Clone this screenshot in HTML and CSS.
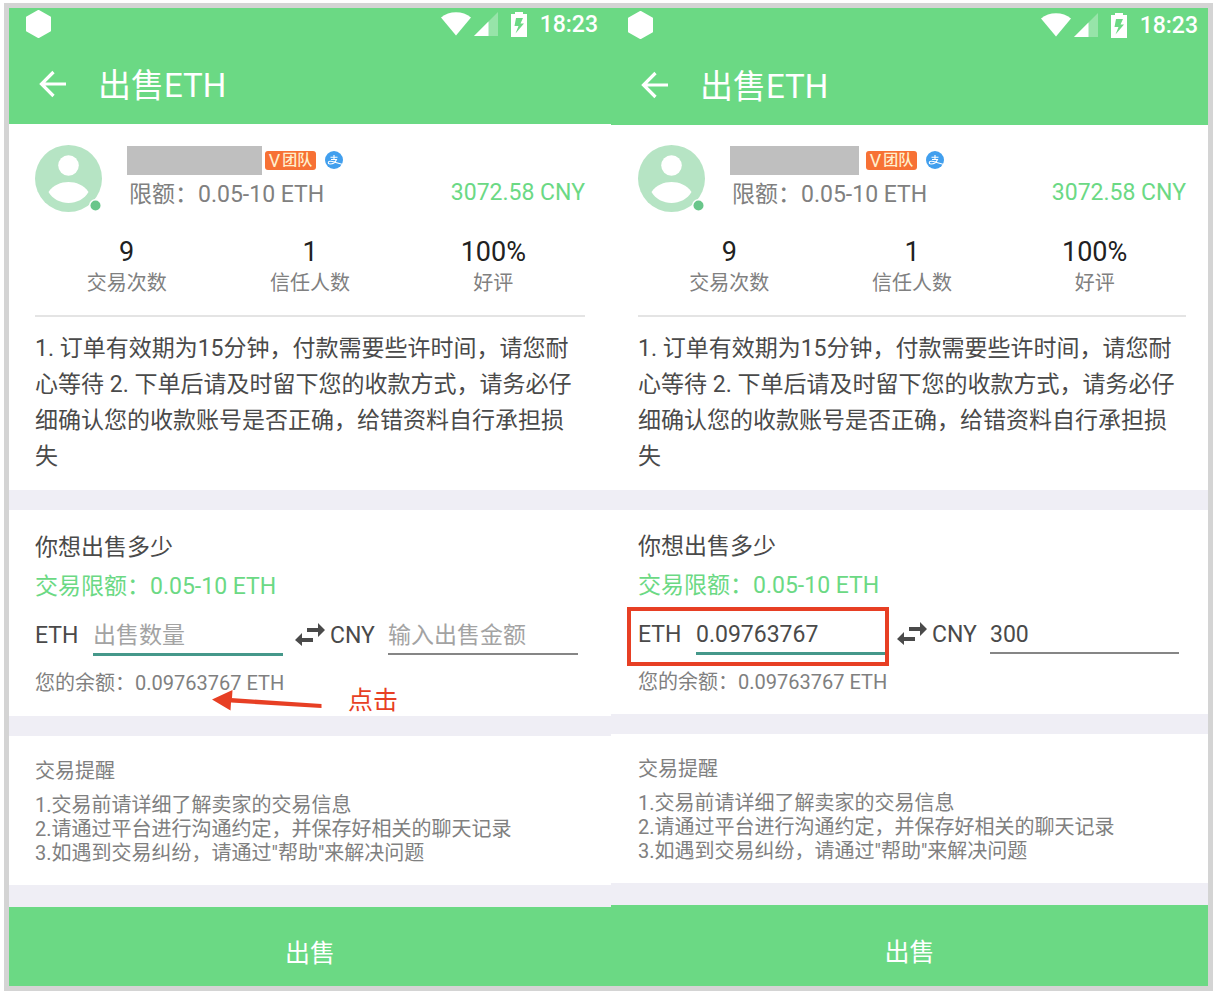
FILE: index.html
```html
<!DOCTYPE html>
<html lang="zh-CN">
<head>
<meta charset="utf-8">
<meta name="viewport" content="width=device-width, initial-scale=1">
<title>出售ETH</title>
<link rel="stylesheet" href="styles.css">
</head>
<body>
<svg class="sprite" aria-hidden="true">
  <symbol id="hexagon" viewBox="0 0 25 28"><path d="M12.500 1 24 7.300V20.700L12.500 27 1 20.700V7.300Z" fill="#fff" stroke="#fff" stroke-width="2" stroke-linejoin="round"/></symbol>
  <symbol id="wifi" viewBox="0 0 30 24"><path d="M0 5.500C8-1.500 22-1.500 30 5.500L15 23.500Z" fill="#fff"/></symbol>
  <symbol id="signal" viewBox="0 0 24 24"><path d="M24 0V24H0Z" fill="#fff" opacity=".3"/><path d="M14.500 9.500V24H0Z" fill="#fff"/></symbol>
  <symbol id="battery" viewBox="0 0 16 25"><path fill-rule="evenodd" d="M4 0H12V2H16V25H0V2H4ZM5 6 3.500 14H7.500L4.500 21.500 13 11.500H9.500L12 6Z" fill="#fff"/></symbol>
  <symbol id="back" viewBox="0 0 28 28"><path d="M27 14H3M14.500 2 2.500 14 14.500 26" fill="none" stroke="#fff" stroke-width="3.200"/></symbol>
  <symbol id="avatar" viewBox="0 0 67 67"><circle cx="33.500" cy="33.500" r="33.500" fill="#b6e4c4"/><circle cx="33.500" cy="20.500" r="10.300" fill="#fff"/><path d="M13.500 47C18 40 26 37 33.500 37S49 40 53.500 47C49.500 54 41.500 58 33.500 58S17.500 54 13.500 47Z" fill="#fff"/><circle cx="60.500" cy="60.500" r="6.500" fill="#fff"/><circle cx="60.500" cy="60.500" r="5" fill="#69c68a"/></symbol>
  <symbol id="alipay" viewBox="0 0 18 18"><circle cx="9" cy="9" r="9" fill="#419fee"/><path d="M5.500 6.300H12.500M9 4V8.500M6 8.500H11.500C10.500 11 8 13 5 13 2.500 12.800 2.800 10.600 5 10.300 8 10 12 12.500 17 13.300" fill="none" stroke="#fff" stroke-width="1.100"/></symbol>
  <symbol id="swap" viewBox="0 0 30 24"><path d="M12 5H23V0L30 7 23 14V9H12ZM18 15H7V10L0 17 7 23V19H18Z" fill="#4a4a4a"/></symbol>
</svg>
<main class="frame">
  <section class="screen">
    <header class="header">
      <div class="status">
        <svg class="status__app"><use href="#hexagon"/></svg>
        <svg class="status__wifi"><use href="#wifi"/></svg>
        <svg class="status__signal"><use href="#signal"/></svg>
        <svg class="status__battery"><use href="#battery"/></svg>
        <time>18:23</time>
      </div>
      <div class="toolbar">
        <button class="back" type="button" aria-label="返回"><svg><use href="#back"/></svg></button>
        <h1>出售ETH</h1>
      </div>
    </header>
    <section class="card seller">
      <div class="profile">
        <svg class="avatar"><use href="#avatar"/></svg>
        <div class="profile__info">
          <div class="name"><span class="name__mask"></span><span class="badge"><span class="badge__v">V</span>团队</span><svg class="pay"><use href="#alipay"/></svg></div>
          <p class="limit">限额：0.05-10 ETH</p>
        </div>
        <p class="price">3072.58 CNY</p>
      </div>
      <dl class="stats">
        <div><dd>9</dd><dt>交易次数</dt></div>
        <div><dd>1</dd><dt>信任人数</dt></div>
        <div><dd>100%</dd><dt>好评</dt></div>
      </dl>
      <p class="terms">1. 订单有效期为15分钟，付款需要些许时间，请您耐心等待 2. 下单后请及时留下您的收款方式，请务必仔细确认您的收款账号是否正确，给错资料自行承担损失</p>
    </section>
    <section class="card order">
      <h2>你想出售多少</h2>
      <p class="range">交易限额：0.05-10 ETH</p>
      <form class="amounts">
        <div class="field"><label for="eth-a">ETH</label><input class="active" id="eth-a" type="text" placeholder="出售数量"></div>
        <svg class="swap"><use href="#swap"/></svg>
        <div class="field"><label for="cny-a">CNY</label><input id="cny-a" type="text" placeholder="输入出售金额"></div>
      </form>
      <p class="balance">您的余额：0.09763767 ETH</p>
      <div class="hint">
        <svg viewBox="0 0 110 22"><path d="M19 8 109.500 14V18L19 12.500 18.500 20.500 0 9.500 20.500 0 20 8Z" fill="#e73f24"/></svg>
        <span>点击</span>
      </div>
    </section>
    <section class="card notes">
      <h3>交易提醒</h3>
      <p>1.交易前请详细了解卖家的交易信息</p>
      <p>2.请通过平台进行沟通约定，并保存好相关的聊天记录</p>
      <p>3.如遇到交易纠纷，请通过"帮助"来解决问题</p>
    </section>
    <button class="sell" type="button">出售</button>
  </section>

  <section class="screen screen--filled">
    <header class="header">
      <div class="status">
        <svg class="status__app"><use href="#hexagon"/></svg>
        <svg class="status__wifi"><use href="#wifi"/></svg>
        <svg class="status__signal"><use href="#signal"/></svg>
        <svg class="status__battery"><use href="#battery"/></svg>
        <time>18:23</time>
      </div>
      <div class="toolbar">
        <button class="back" type="button" aria-label="返回"><svg><use href="#back"/></svg></button>
        <h1>出售ETH</h1>
      </div>
    </header>
    <section class="card seller">
      <div class="profile">
        <svg class="avatar"><use href="#avatar"/></svg>
        <div class="profile__info">
          <div class="name"><span class="name__mask"></span><span class="badge"><span class="badge__v">V</span>团队</span><svg class="pay"><use href="#alipay"/></svg></div>
          <p class="limit">限额：0.05-10 ETH</p>
        </div>
        <p class="price">3072.58 CNY</p>
      </div>
      <dl class="stats">
        <div><dd>9</dd><dt>交易次数</dt></div>
        <div><dd>1</dd><dt>信任人数</dt></div>
        <div><dd>100%</dd><dt>好评</dt></div>
      </dl>
      <p class="terms">1. 订单有效期为15分钟，付款需要些许时间，请您耐心等待 2. 下单后请及时留下您的收款方式，请务必仔细确认您的收款账号是否正确，给错资料自行承担损失</p>
    </section>
    <section class="card order">
      <h2>你想出售多少</h2>
      <p class="range">交易限额：0.05-10 ETH</p>
      <form class="amounts">
        <div class="field field--marked"><label for="eth-b">ETH</label><input class="active" id="eth-b" type="text" value="0.09763767"></div>
        <svg class="swap"><use href="#swap"/></svg>
        <div class="field"><label for="cny-b">CNY</label><input id="cny-b" type="text" value="300"></div>
      </form>
      <p class="balance">您的余额：0.09763767 ETH</p>
    </section>
    <section class="card notes">
      <h3>交易提醒</h3>
      <p>1.交易前请详细了解卖家的交易信息</p>
      <p>2.请通过平台进行沟通约定，并保存好相关的聊天记录</p>
      <p>3.如遇到交易纠纷，请通过"帮助"来解决问题</p>
    </section>
    <button class="sell" type="button">出售</button>
  </section>
</main>
</body>
</html>
```
FILE: styles.css
```css
* { box-sizing: border-box; }
body, h1, h2, h3, p, dl, dd { margin: 0; }
body {
  padding: 3px 3px 5px 4px;
  background: #fff;
  color: #4a4a4a;
  font-family: Roboto, "Noto Sans CJK SC", sans-serif;
  font-size: 23px;
}
h1, h2, h3 { font-weight: 400; }
svg { display: block; flex: none; }
button, input { font: inherit; border: 0; padding: 0; }
.sprite { position: absolute; width: 0; height: 0; }

.frame { display: flex; border: 5px solid #d4d4d4; }
.screen {
  --left: 26px;
  --right: 26px;
  --seller-top: 21px;
  --order-top: 18px;
  --order-bottom: 18px;
  --mask: 135px;
  --mask-gap: 3px;
  --status-right: 13px;
  --header-top: 0px;
  flex: 602 1 0;
  min-width: 0;
  display: flex;
  flex-direction: column;
  background: #efeef5;
}
.screen--filled {
  --left: 27px;
  --right: 22px;
  --seller-top: 20px;
  --order-top: 17px;
  --order-bottom: 17px;
  --mask: 129px;
  --mask-gap: 7px;
  --status-right: 10px;
  --header-top: 1px;
  flex-grow: 597;
}

.header { padding-top: var(--header-top); background: #6bd984; color: #fff; }
.status {
  display: flex;
  align-items: center;
  height: 32px;
  padding: 0 var(--status-right) 0 17px;
  font-weight: 500;
}
.status__app { width: 25px; height: 28px; margin-right: auto; }
.status__wifi { width: 30px; height: 24px; margin-right: 3px; }
.status__signal { width: 24px; height: 24px; margin-right: 13px; }
.status__battery { width: 16px; height: 25px; margin-right: 13px; }
.toolbar {
  display: flex;
  align-items: center;
  gap: 31px;
  height: 84px;
  padding: 4px 30px 0;
}
.back { width: 28px; height: 28px; background: none; }
.back svg { width: 28px; height: 28px; }
.toolbar h1 { padding-top: 3px; font-size: 33px; line-height: 48px; }

.card {
  position: relative;
  padding-left: var(--left);
  padding-right: var(--right);
  margin-bottom: 20px;
  background: #fff;
}
.seller { padding-top: var(--seller-top); padding-bottom: 15px; }
.profile { display: flex; height: 67px; }
.avatar { width: 67px; height: 67px; margin-right: 25px; }
.profile__info { flex: 1; min-width: 0; }
.name { display: flex; align-items: center; height: 30px; }
.name__mask { width: var(--mask); height: 29px; margin-right: var(--mask-gap); background: #bfbfbf; }
.badge {
  display: flex;
  align-items: center;
  justify-content: center;
  gap: 2px;
  width: 51px;
  height: 19px;
  margin-right: 9px;
  border-radius: 3px;
  background: #f77135;
  color: #fff0cf;
  font-size: 15px;
  font-weight: 500;
  line-height: 19px;
}
.badge__v { font-size: 18px; font-weight: 400; }
.pay { width: 18px; height: 18px; }
.limit { padding: 2px 0 0 2px; line-height: 36px; color: #808080; white-space: nowrap; }
.price { padding-top: 31px; line-height: 34px; color: #6bd984; }

.stats {
  display: grid;
  grid-template-columns: repeat(3, 1fr);
  margin-top: 24px;
  padding-bottom: 17px;
  border-bottom: 2px solid #e4e4e4;
  text-align: center;
}
.stats div { display: flex; flex-direction: column; }
.stats dd { color: #212121; font-size: 27px; line-height: 32px; }
.stats dt { color: #808080; font-size: 20px; line-height: 30px; }
.terms { padding-top: 14px; line-height: 36px; }

.order { padding-top: var(--order-top); padding-bottom: var(--order-bottom); }
.order h2, .range { font-size: 23px; line-height: 39px; }
.range { color: #6bd984; }
.amounts { display: flex; padding-right: 7px; margin-top: 6px; }
.field { display: flex; flex: 1 1 0; min-width: 0; line-height: 44px; }
.field label { flex: none; width: 58px; height: 44px; padding-top: 2px; }
.field input {
  flex: 1;
  min-width: 0;
  height: 43px;
  padding-top: 6px;
  border-bottom: 2px solid #868686;
  border-radius: 0;
  outline: 0;
  background: transparent;
  color: #4a4a4a;
}
.field input.active { height: 44px; border-bottom: 3px solid #45988a; }
.field input::placeholder { color: #a3a3a3; opacity: 1; }
.field--marked { position: relative; }
.field--marked::after {
  content: "";
  position: absolute;
  inset: -4px -4px -11px -11px;
  border: 4px solid #e73f24;
  pointer-events: none;
}
.swap { width: 30px; height: 24px; margin: 11px 5px 0 12px; }
.balance { margin-top: 12px; color: #808080; font-size: 20px; line-height: 30px; }
.hint {
  position: absolute;
  left: 203px;
  bottom: -2px;
  display: flex;
  align-items: center;
  gap: 26px;
  color: #e73f24;
  font-size: 25px;
  line-height: 34px;
}
.hint svg { width: 110px; height: 22px; }

.notes { margin-bottom: 22px; padding-top: 20px; padding-bottom: 20px; color: #808080; font-size: 20px; line-height: 24px; }
.notes h3 { margin-bottom: 7px; font-size: 20px; line-height: 30px; }
.sell {
  flex: 1 0 79px;
  padding-top: 8px;
  background: #6bd984;
  color: #fff;
  font-size: 25px;
}
```
